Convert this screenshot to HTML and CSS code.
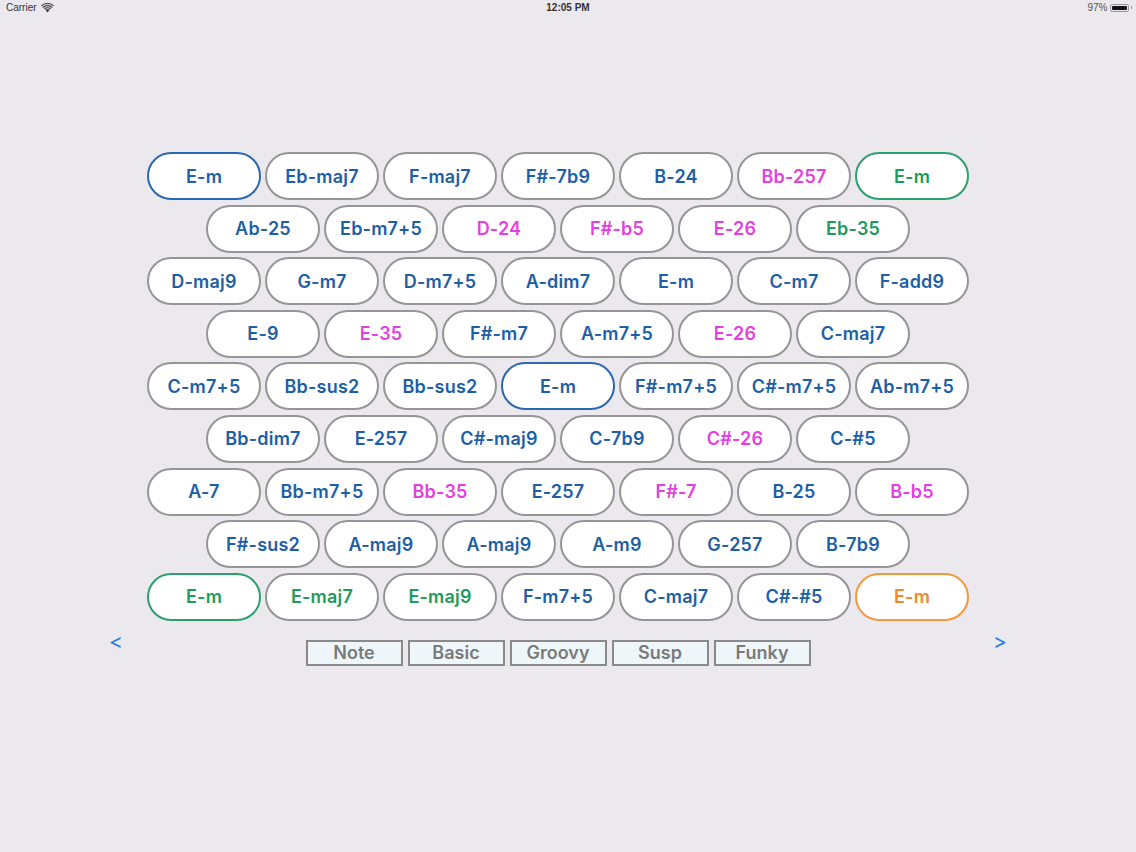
FILE: index.html
```html
<!DOCTYPE html>
<html>
<head>
<meta charset="utf-8">
<link rel="stylesheet" href="styles.css">
</head>
<body>
<div class="status">
  <div class="st-left">Carrier
    <svg class="wifi" width="13" height="10" viewBox="0 0 13 10"><path d="M6.5 9.5 L4.3 7.1 A3.2 3.2 0 0 1 8.7 7.1 Z" fill="#444"/><path d="M2.9 5.6 A5.2 5.2 0 0 1 10.1 5.6 L9.2 6.5 A4 4 0 0 0 3.8 6.5 Z" fill="#444"/><path d="M1.3 4 A7.6 7.6 0 0 1 11.7 4 L10.8 4.9 A6.3 6.3 0 0 0 2.2 4.9 Z" fill="#444"/><path d="M0 2.5 A9.5 9.5 0 0 1 13 2.5 L12.3 3.3 A8.4 8.4 0 0 0 0.7 3.3 Z" fill="#444"/></svg>
  </div>
  <div class="st-center">12:05 PM</div>
  <div class="st-right">97% <span class="battery"><span class="bfill"></span></span><span class="bcap"></span></div>
</div>
<div class="board">
  <div class="row">
    <div class="key blue sel-blue">E-m</div><div class="key blue">Eb-maj7</div><div class="key blue">F-maj7</div><div class="key blue">F#-7b9</div><div class="key blue">B-24</div><div class="key pink">Bb-257</div><div class="key green sel-green">E-m</div>
  </div>
  <div class="row even">
    <div class="key blue">Ab-25</div><div class="key blue">Eb-m7+5</div><div class="key pink">D-24</div><div class="key pink">F#-b5</div><div class="key pink">E-26</div><div class="key green">Eb-35</div>
  </div>
  <div class="row">
    <div class="key blue">D-maj9</div><div class="key blue">G-m7</div><div class="key blue">D-m7+5</div><div class="key blue">A-dim7</div><div class="key blue">E-m</div><div class="key blue">C-m7</div><div class="key blue">F-add9</div>
  </div>
  <div class="row even">
    <div class="key blue">E-9</div><div class="key pink">E-35</div><div class="key blue">F#-m7</div><div class="key blue">A-m7+5</div><div class="key pink">E-26</div><div class="key blue">C-maj7</div>
  </div>
  <div class="row">
    <div class="key blue">C-m7+5</div><div class="key blue">Bb-sus2</div><div class="key blue">Bb-sus2</div><div class="key blue sel-blue">E-m</div><div class="key blue">F#-m7+5</div><div class="key blue">C#-m7+5</div><div class="key blue">Ab-m7+5</div>
  </div>
  <div class="row even">
    <div class="key blue">Bb-dim7</div><div class="key blue">E-257</div><div class="key blue">C#-maj9</div><div class="key blue">C-7b9</div><div class="key pink">C#-26</div><div class="key blue">C-#5</div>
  </div>
  <div class="row">
    <div class="key blue">A-7</div><div class="key blue">Bb-m7+5</div><div class="key pink">Bb-35</div><div class="key blue">E-257</div><div class="key pink">F#-7</div><div class="key blue">B-25</div><div class="key pink">B-b5</div>
  </div>
  <div class="row even">
    <div class="key blue">F#-sus2</div><div class="key blue">A-maj9</div><div class="key blue">A-maj9</div><div class="key blue">A-m9</div><div class="key blue">G-257</div><div class="key blue">B-7b9</div>
  </div>
  <div class="row">
    <div class="key green sel-green">E-m</div><div class="key green">E-maj7</div><div class="key green">E-maj9</div><div class="key blue">F-m7+5</div><div class="key blue">C-maj7</div><div class="key blue">C#-#5</div><div class="key orange sel-orange">E-m</div>
  </div>
</div>
<div class="bottom">
  <div class="arrow">&lt;</div>
  <div class="tabs">
    <div class="tab">Note</div><div class="tab">Basic</div><div class="tab">Groovy</div><div class="tab">Susp</div><div class="tab">Funky</div>
  </div>
  <div class="arrow">&gt;</div>
</div>
</body>
</html>
```

FILE: styles.css
```css
html, body {
  margin: 0;
  padding: 0;
  background: #ebe8ee;
  width: 1136px;
  height: 852px;
  overflow: hidden;
  font-family: "Inter", "Liberation Sans", sans-serif;
}
.status {
  height: 15px;
  display: flex;
  align-items: center;
  justify-content: space-between;
  padding: 0 4px 0 6px;
  font-family: "Liberation Sans", sans-serif;
  font-size: 10px;
  color: #333;
  position: relative;
}
.st-left { display: flex; align-items: center; gap: 4px; }
.st-center {
  position: absolute;
  left: 0; right: 0;
  text-align: center;
  font-weight: bold;
  font-size: 10px;
}
.st-right { display: flex; align-items: center; gap: 2px; color: #555; }
.battery {
  width: 19px; height: 8px;
  border: 1px solid #999;
  border-radius: 2px;
  padding: 1px;
  box-sizing: border-box;
  display: inline-flex;
}
.bfill { flex: 1; background: #111; border-radius: 1px; }
.bcap { width: 1.5px; height: 3px; background: #999; }
.board {
  padding-top: 137px;
  padding-left: 147px;
  display: flex;
  flex-direction: column;
  gap: 4.6px;
}
.row {
  display: flex;
  gap: 4px;
}
.row.even { padding-left: 59px; }
.key {
  width: 114px;
  height: 48px;
  box-sizing: border-box;
  border: 2px solid #959597;
  border-radius: 24px;
  background: #fff;
  display: flex;
  align-items: center;
  justify-content: center;
  font-size: 18px;
  font-weight: 600;
  letter-spacing: 0.2px;
}
.blue { color: #1d5fa6; }
.pink { color: #e43fe0; }
.green { color: #1e9a5c; }
.orange { color: #ef8a2a; }
.sel-blue { border-color: #2a68b0; }
.sel-green { border-color: #2ba06c; }
.sel-orange { border-color: #f2993e; }
.bottom {
  margin-top: 8px;
  margin-left: 108px;
  width: 900px;
  display: flex;
  align-items: flex-start;
  justify-content: space-between;
}
.arrow {
  color: #2a7ee0;
  font-size: 21px;
  line-height: 26px;
  width: 16px;
  text-align: center;
}
.tabs {
  display: flex;
  gap: 5px;
  margin-top: 11px;
}
.tab {
  width: 97px;
  height: 26px;
  box-sizing: border-box;
  border: 2px solid #8a8a8a;
  background: #eef6fa;
  color: #7a7a7a;
  font-size: 18px;
  font-weight: 600;
  display: flex;
  align-items: center;
  justify-content: center;
}
```
